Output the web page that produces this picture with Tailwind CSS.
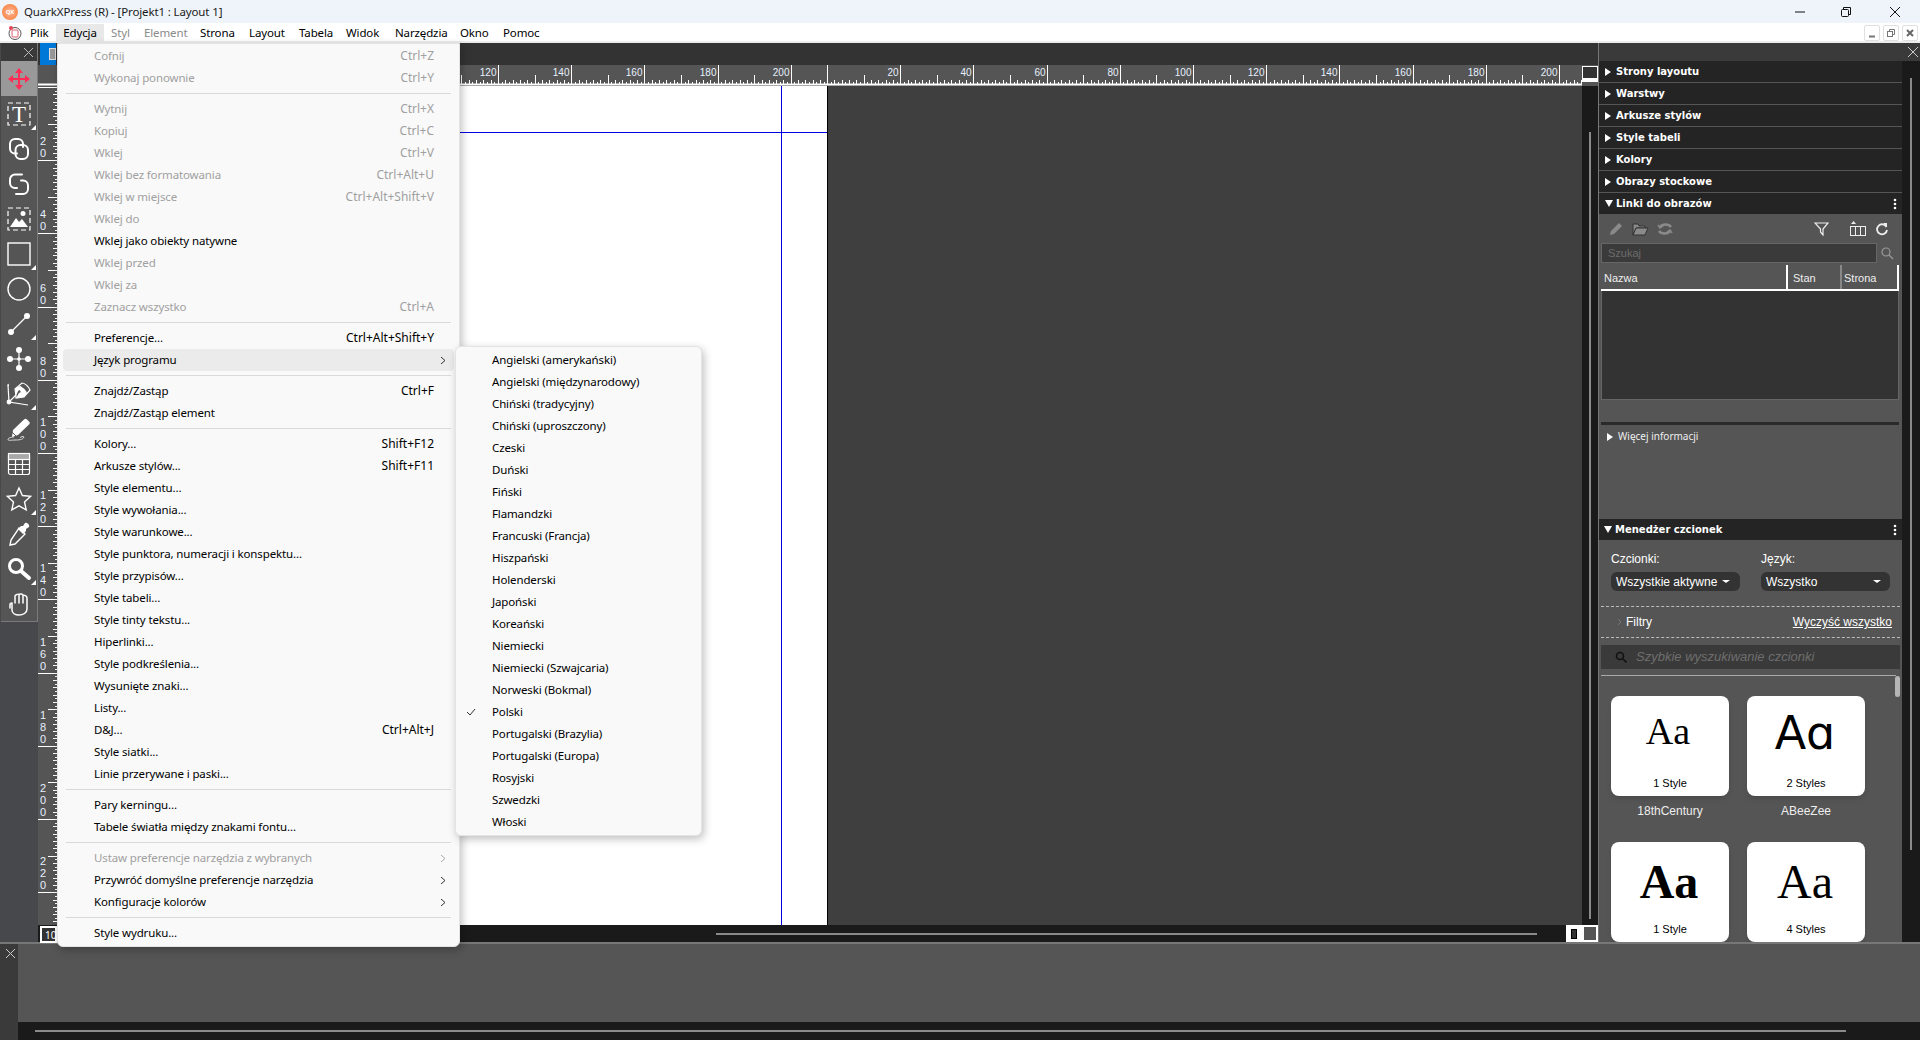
<!DOCTYPE html>
<html lang="pl">
<head>
  <meta charset="UTF-8" />
  <title>QuarkXPress</title>
  <script src="https://cdn.jsdelivr.net/npm/@tailwindcss/browser@4"></script>
</head>
<body class="w-[1920px] h-[1040px] overflow-hidden relative bg-[#555555] font-['Noto_Sans',sans-serif] text-[12px] text-black flex flex-col">

  <!-- title bar -->
  <div class="h-[23px] bg-[#eff4fb] flex items-center relative shrink-0">
    <div class="ml-[2px] mt-[1px] w-[16px] h-[16px] rounded-full bg-[radial-gradient(circle,#ffb39a,#f57a2c)] flex items-center justify-center text-[6px] text-white font-bold">QX</div>
    <span class="ml-[6px] text-[#1a1a1a] text-[11.5px] tracking-[-0.13px]">QuarkXPress (R) - [Projekt1 : Layout 1]</span>
    <div class="ml-auto flex items-center h-full">
      <svg class="mr-[34px]" width="12" height="12" viewBox="0 0 12 12"><path d="M1 6h10" stroke="#111" stroke-width="1"/></svg>
      <svg class="mr-[37px]" width="12" height="12" viewBox="0 0 12 12" fill="none" stroke="#111"><rect x="1.5" y="3.5" width="7" height="7" rx="1"/><path d="M3.5 3V1.5h7v7H9"/></svg>
      <svg class="mr-[19px]" width="12" height="12" viewBox="0 0 12 12" stroke="#111"><path d="M1 1l10 10M11 1L1 11"/></svg>
    </div>
  </div>

  <!-- menu bar -->
  <div class="h-[20px] bg-white border-b-2 border-[#ececec] flex items-center shrink-0 relative text-[11.5px] tracking-[-0.13px] pt-[1px]">
    <svg class="ml-[7px] mr-[7px]" width="16" height="16" viewBox="0 0 16 16" fill="none"><circle cx="8" cy="8.5" r="6" stroke="#555"/><rect x="5" y="5" width="6" height="7" rx="1" stroke="#e25a6a"/><circle cx="4" cy="3" r="2" fill="#e8455c"/></svg>
    <span class="w-[26px]">Plik</span>
    <span class="w-[48px] h-full bg-[#e8e8e8] flex items-center justify-center">Edycja</span>
    <span class="ml-[7px] w-[33px] text-[#8a8a8a]">Styl</span>
    <span class="w-[56px] text-[#8a8a8a]">Element</span>
    <span class="w-[49px]">Strona</span>
    <span class="w-[50px]">Layout</span>
    <span class="w-[47px]">Tabela</span>
    <span class="w-[49px]">Widok</span>
    <span class="w-[65px]">Narzędzia</span>
    <span class="w-[43px]">Okno</span>
    <span>Pomoc</span>
    <div class="ml-auto mr-[2px] flex gap-[3px]">
      <div class="w-[16px] h-[16px] border border-[#e0e0e0] rounded-[2px] flex items-center justify-center"><svg width="10" height="10" viewBox="0 0 10 10"><path d="M2 8.5h6" stroke="#777" stroke-width="2"/></svg></div>
      <div class="w-[16px] h-[16px] border border-[#e0e0e0] rounded-[2px] flex items-center justify-center"><svg width="10" height="10" viewBox="0 0 10 10" fill="none" stroke="#777"><rect x="1.5" y="3.5" width="5" height="5"/><path d="M3.5 3V1.5h5v5H7"/></svg></div>
      <div class="w-[16px] h-[16px] border border-[#e0e0e0] rounded-[2px] flex items-center justify-center"><svg width="10" height="10" viewBox="0 0 10 10" stroke="#666" stroke-width="2"><path d="M2 2l6 6M8 2L2 8"/></svg></div>
    </div>
  </div>

  <!-- workspace -->
  <div class="h-[899px] flex shrink-0 overflow-hidden">

    <!-- tools -->
    <div class="w-[38px] bg-[#47484b] shrink-0">
      <div class="h-[579px] ml-[1px] w-[37px] bg-[#555555] border-r border-b border-[#7a7a7a]">
        <div class="h-[18px] bg-[#3a3a3a] flex justify-end items-center pr-[3px]"><svg width="11" height="11" viewBox="0 0 11 11" stroke="#bbb"><path d="M1 1l9 9M10 1l-9 9"/></svg></div>
        <div class="h-[35px] bg-[#999999] flex items-center justify-center pr-[1px]">
          <svg width="24" height="24" viewBox="0 0 24 24" fill="#ff2d55"><path d="M12 1l4 5h-3v5h5V8l5 4-5 4v-3h-5v5h3l-4 5-4-5h3v-5H6v3l-5-4 5-4v3h5V6H8z"/></svg>
        </div>
        <div class="h-[35px] flex items-center justify-center relative pr-[1px]">
          <svg width="26" height="26" viewBox="0 0 26 26" fill="none"><rect x="2" y="2" width="22" height="22" stroke="#fff" stroke-width="1.2" stroke-dasharray="5 3"/><text x="13" y="21" text-anchor="middle" font-family="Liberation Serif" font-size="23" fill="#fff" stroke="none">T</text></svg>
          <span class="absolute right-[1px] bottom-[1px] w-0 h-0 border-l-[5px] border-l-transparent border-b-[5px] border-b-white"></span>
        </div>
        <div class="h-[35px] flex items-center justify-center pr-[1px]">
          <svg width="26" height="26" viewBox="0 0 26 26" fill="none" stroke="#fff" stroke-width="2" stroke-linecap="round"><path d="M11 17.500H9a5 5 0 0 1-5-5V8a5 5 0 0 1 5-5h3a5 5 0 0 1 5 5v3"/><path d="M9.500 15v-1a5 5 0 0 1 5-5H17a5 5 0 0 1 5 5v4a5 5 0 0 1-5 5h-2.500a5 5 0 0 1-5-5z"/></svg>
        </div>
        <div class="h-[35px] flex items-center justify-center pr-[1px]">
          <svg width="26" height="26" viewBox="0 0 26 26" fill="none" stroke="#fff" stroke-width="2" stroke-linecap="round"><path d="M16 3.500H9a5 5 0 0 0-5 5V12a5 5 0 0 0 5 5h2"/><path d="M15 9.500h2a5 5 0 0 1 5 5V18a5 5 0 0 1-5 5h-7"/></svg>
        </div>
        <div class="h-[35px] flex items-center justify-center pr-[1px]">
          <svg width="26" height="26" viewBox="0 0 26 26" fill="none"><rect x="2" y="2" width="22" height="22" stroke="#fff" stroke-width="1.2" stroke-dasharray="5 3"/><circle cx="17" cy="7.5" r="2.5" fill="#fff"/><path d="M4 21l6-9 3 4 3-3 6 8z" fill="#fff"/></svg>
        </div>
        <div class="h-[35px] flex items-center justify-center relative pr-[1px]">
          <svg width="26" height="26" viewBox="0 0 26 26" fill="none"><rect x="2" y="2" width="22" height="22" stroke="#fff" stroke-width="1.4"/></svg>
          <span class="absolute right-[1px] bottom-[1px] w-0 h-0 border-l-[5px] border-l-transparent border-b-[5px] border-b-white"></span>
        </div>
        <div class="h-[35px] flex items-center justify-center pr-[1px]">
          <svg width="26" height="26" viewBox="0 0 26 26" fill="none"><circle cx="13" cy="13" r="11" stroke="#fff" stroke-width="1.4"/></svg>
        </div>
        <div class="h-[35px] flex items-center justify-center relative pr-[1px]">
          <svg width="26" height="26" viewBox="0 0 26 26" fill="#fff"><path d="M5 21L21 5" stroke="#fff" stroke-width="1.2"/><circle cx="5" cy="21" r="3"/><circle cx="21" cy="5" r="3"/></svg>
          <span class="absolute right-[1px] bottom-[1px] w-0 h-0 border-l-[5px] border-l-transparent border-b-[5px] border-b-white"></span>
        </div>
        <div class="h-[35px] flex items-center justify-center pr-[1px]">
          <svg width="26" height="26" viewBox="0 0 26 26" fill="#fff"><path d="M13 4v18M4 13h18" stroke="#fff" stroke-width="1.2"/><circle cx="13" cy="4" r="3"/><circle cx="13" cy="22" r="3"/><circle cx="4" cy="13" r="3"/><circle cx="22" cy="13" r="3"/><circle cx="13" cy="13" r="1.800"/></svg>
        </div>
        <div class="h-[35px] flex items-center justify-center relative pr-[1px]">
          <svg width="28" height="26" viewBox="0 0 28 26" fill="none" stroke="#fff" stroke-width="1.2"><path d="M3 4l1 17 19 3"/><path d="M3 3l.5 2M4 21l7-7"/><circle cx="4" cy="21" r="1.800" fill="#fff"/><path d="M10 8l7-6c3 0 7 4 8 7l-6 7-8 1c0-3-.5-6-1-9z"/><path d="M15 5c2 .5 6 4 7 7l-3 4-8 1 3-5c1 0 2-1 1.500-2s-2-1-2.500.5l-2 4c-.5-3-.5-5-1-7z" fill="#fff" stroke="none"/></svg>
          <span class="absolute right-[1px] bottom-[1px] w-0 h-0 border-l-[5px] border-l-transparent border-b-[5px] border-b-white"></span>
        </div>
        <div class="h-[35px] flex items-center justify-center pr-[1px]">
          <svg width="26" height="26" viewBox="0 0 26 26" fill="none"><path d="M7 14L18 3.500c1-1 2-1 3 0l2 2c1 1 1 2 0 3L12 19l-6 2z" fill="#fff"/><path d="M6 16l4 4" stroke="#555" stroke-width="1"/><path d="M8 21c-3 0-6 1-6 2.500s4 .5 7 .5 8 0 9-3c-1-1-3 0-4 .5" stroke="#ddd"/></svg>
        </div>
        <div class="h-[35px] flex items-center justify-center pr-[1px]">
          <svg width="24" height="24" viewBox="0 0 24 24" fill="none" stroke="#fff" stroke-width="1.2"><rect x="1.5" y="1.5" width="21" height="21" rx="2"/><rect x="1.5" y="1.5" width="21" height="6" fill="#a8a8a8"/><path d="M1.5 12.5h21M1.5 17.5h21M8.5 7.500v15M15.500 7.500v15"/></svg>
        </div>
        <div class="h-[35px] flex items-center justify-center relative pr-[1px]">
          <svg width="26" height="26" viewBox="0 0 26 26" fill="none" stroke="#fff" stroke-width="1.4"><path d="M13 2l3.400 7.500 8.100.9-6 5.500 1.700 8L13 19.800 5.800 23.900l1.700-8-6-5.500 8.100-.9z"/></svg>
          <span class="absolute right-[1px] bottom-[1px] w-0 h-0 border-l-[5px] border-l-transparent border-b-[5px] border-b-white"></span>
        </div>
        <div class="h-[35px] flex items-center justify-center pr-[1px]">
          <svg width="26" height="26" viewBox="0 0 26 26" fill="none"><path d="M13 7l6 6-10 10-5 1 1-5z" stroke="#fff" stroke-width="1.4"/><path d="M12 8l3-3 2 0 2-3c2-1 5 2 4 4l-3 2v2l-3 3z" fill="#fff"/></svg>
        </div>
        <div class="h-[35px] flex items-center justify-center relative pr-[1px]">
          <svg width="26" height="26" viewBox="0 0 26 26" fill="none" stroke="#fff" stroke-width="3"><circle cx="10" cy="10" r="6.500"/><path d="M15 15l8 7" stroke-width="4" stroke-linecap="round"/></svg>
          <span class="absolute right-[1px] bottom-[1px] w-0 h-0 border-l-[5px] border-l-transparent border-b-[5px] border-b-white"></span>
        </div>
        <div class="h-[35px] flex items-center justify-center pr-[1px]">
          <svg width="24" height="24" viewBox="0 0 24 24" fill="none" stroke="#fff" stroke-width="1.5" stroke-linecap="round"><path d="M5 11v7c0 3 3 5 7 5s8-2 8-6V6M5 11c-1 0-2 1-2 2v3M8 11V4M12 11V2.500M16 11V3.500M20 11V6M8 4c0-1.500 4-2 4-1.500M12 2.500c1-1 4-.5 4 1M16 3.500c1-1 4 .5 4 2.500"/></svg>
        </div>
      </div>
    </div>

    <!-- document window -->
    <div class="flex-1 flex flex-col min-w-0 bg-[#3f3f3f]">
      <div class="h-[22px] bg-[#333333] shrink-0 flex">
        <div class="ml-[2px] w-[16px] bg-[#0078d7] flex items-center pl-[9px]"><span class="w-[7px] h-[12px] border border-[#ddd] bg-[#999]"></span></div>
      </div>
      <div class="h-[21px] shrink-0 flex bg-[#555555]">
        <svg id="hruler" width="1544" height="21" class="shrink-0"></svg>
        <div class="w-[16px] h-[16px] mt-[1px] bg-white p-[1px] pb-[4px]"><div class="w-full h-full bg-[#333333]"></div></div>
      </div>
      <div class="flex-1 flex min-h-0">
        <svg id="vruler" width="19" height="840" class="shrink-0 bg-[#555555]"></svg>
        <div class="w-[771px] bg-white border-r border-black relative shrink-0">
          <div class="absolute left-0 right-0 top-[46px] h-[1px] bg-[#0000e0]"></div>
          <div class="absolute top-0 bottom-0 left-[724px] w-[1px] bg-[#0000e0]"></div>
        </div>
        <div class="flex-1 bg-[#3f3f3f]"></div>
        <div class="w-[16px] bg-[#1a1a1a] flex justify-center pt-[46px] pb-[6px]"><div class="w-[2px] h-full bg-[#8a8a8a]"></div></div>
      </div>
      <div class="h-[17px] shrink-0 bg-[#1a1a1a] flex items-center relative">
        <div class="ml-[678px] w-[821px] h-[2px] bg-[#8a8a8a]"></div>
        <div class="ml-auto flex h-full">
          <div class="w-[16px] h-full bg-white flex items-center justify-center"><div class="w-[6px] h-[10px] border border-black bg-[#333333]"></div></div>
          <div class="w-[16px] h-full border-2 border-white bg-[#555555]"></div>
        </div>
      </div>
    </div>

    <!-- palettes -->
    <div class="w-[322px] shrink-0 flex flex-col">
      <div class="h-[18px] bg-[#3a3a3a] border-l border-[#777] flex justify-end items-center pr-[1px] shrink-0"><svg width="12" height="12" viewBox="0 0 12 12" stroke="#ccc"><path d="M1 1l10 10M11 1L1 11"/></svg></div>
      <div class="flex-1 flex min-h-0">
        <div class="w-[304px] bg-[#555555] border-l border-[#777] flex flex-col overflow-hidden font-['DejaVu_Sans',sans-serif]">
          <div class="h-[22px] shrink-0 bg-[#242424] border-b border-[#555] flex items-center pl-[6px] gap-[5px] text-white text-[10px] font-bold"><span class="w-0 h-0 border-y-[4px] border-y-transparent border-l-[6px] border-l-white"></span>Strony layoutu</div>
          <div class="h-[22px] shrink-0 bg-[#242424] border-b border-[#555] flex items-center pl-[6px] gap-[5px] text-white text-[10px] font-bold"><span class="w-0 h-0 border-y-[4px] border-y-transparent border-l-[6px] border-l-white"></span>Warstwy</div>
          <div class="h-[22px] shrink-0 bg-[#242424] border-b border-[#555] flex items-center pl-[6px] gap-[5px] text-white text-[10px] font-bold"><span class="w-0 h-0 border-y-[4px] border-y-transparent border-l-[6px] border-l-white"></span>Arkusze stylów</div>
          <div class="h-[22px] shrink-0 bg-[#242424] border-b border-[#555] flex items-center pl-[6px] gap-[5px] text-white text-[10px] font-bold"><span class="w-0 h-0 border-y-[4px] border-y-transparent border-l-[6px] border-l-white"></span>Style tabeli</div>
          <div class="h-[22px] shrink-0 bg-[#242424] border-b border-[#555] flex items-center pl-[6px] gap-[5px] text-white text-[10px] font-bold"><span class="w-0 h-0 border-y-[4px] border-y-transparent border-l-[6px] border-l-white"></span>Kolory</div>
          <div class="h-[22px] shrink-0 bg-[#242424] border-b border-[#555] flex items-center pl-[6px] gap-[5px] text-white text-[10px] font-bold"><span class="w-0 h-0 border-y-[4px] border-y-transparent border-l-[6px] border-l-white"></span>Obrazy stockowe</div>
          <div class="h-[21px] shrink-0 bg-[#242424] flex items-center pl-[6px] gap-[3px] text-white text-[10px] font-bold"><span class="w-0 h-0 border-x-[4px] border-x-transparent border-t-[7px] border-t-white"></span>Linki do obrazów
            <svg class="ml-auto mr-[5px]" width="4" height="12" viewBox="0 0 4 12" fill="#fff"><circle cx="2" cy="2" r="1.300"/><circle cx="2" cy="6" r="1.300"/><circle cx="2" cy="10" r="1.300"/></svg>
          </div>

          <!-- image links body -->
          <div class="h-[305px] shrink-0 flex flex-col font-['Liberation_Sans',sans-serif] text-[11px] pl-[2px] pr-[3px]">
            <div class="h-[29px] shrink-0 flex items-center pl-[7px] pr-[10px]">
              <svg width="16" height="16" viewBox="0 0 16 16" fill="#8a8a8a"><path d="M2 14l1-4 8-8 3 3-8 8z"/></svg>
              <svg class="ml-[8px]" width="17" height="16" viewBox="0 0 17 16" fill="#8a8a8a" stroke="#333"><path d="M1 3h5l1 2h6v2H4l-3 7z"/><path d="M4 7h12l-3 7H1z"/></svg>
              <svg class="ml-[8px]" width="16" height="16" viewBox="0 0 16 16" fill="none" stroke="#8a8a8a" stroke-width="2.500"><path d="M14 6A6 4 0 0 0 3 6M2 10a6 4 0 0 0 11 0"/><path d="M1 4l2 3 3-2M15 12l-2-3-3 2" stroke-width="1.500"/></svg>
              <svg class="ml-auto mr-[-1px]" width="15" height="15" viewBox="0 0 15 15" fill="none" stroke="#eee" stroke-width="1.200"><path d="M1 2h13L9 8v6L6.500 11V8z"/></svg>
              <svg class="ml-[21px] mr-[-1px]" width="18" height="16" viewBox="0 0 18 16" fill="none" stroke="#eee"><rect x="1.500" y="5.500" width="5" height="9"/><rect x="6.500" y="5.500" width="10" height="9"/><path d="M11.500 5.500v9"/><path d="M2 3h5L4.500 0z" fill="#eee" stroke="none"/></svg>
              <svg class="ml-[9px]" width="14" height="14" viewBox="0 0 14 14" fill="none" stroke="#eee" stroke-width="1.800"><path d="M11.500 5A5 5 0 1 0 12 8"/><path d="M8 1h4v4z" fill="#eee" stroke="none"/></svg>
            </div>
            <div class="flex shrink-0 h-[20px]">
              <div class="w-[276px] bg-[#3a3a3a] border border-[#666] flex items-center pl-[6px] text-[#6c6c6c]">Szukaj</div>
              <svg class="ml-[3px] mt-[3px]" width="14" height="14" viewBox="0 0 14 14" fill="none" stroke="#999" stroke-width="1.200"><circle cx="6" cy="6" r="4"/><path d="M9 9l4 4"/></svg>
            </div>
            <div class="mt-[2px] flex h-[26px] shrink-0 border-b-2 border-white text-[#eeeeee]">
              <div class="w-[187px] border-r-2 border-white flex items-center pl-[3px] pt-[2px]">Nazwa</div>
              <div class="w-[54px] border-r-2 border-[#888] flex items-center pl-[5px] pt-[2px]">Stan</div>
              <div class="w-[57px] border-r-2 border-white flex items-center pl-[2px] pt-[2px]">Strona</div>
            </div>
            <div class="h-[109px] shrink-0 bg-[#333333] border border-[#666] border-t-0"></div>
            <div class="mt-[22px] h-[3px] shrink-0 bg-[#2b2b2b]"></div>
            <div class="mt-[4px] flex items-center gap-[5px] pl-[6px] text-[#eeeeee] text-[10px] font-['Noto_Sans',sans-serif]"><span class="w-0 h-0 border-y-[4px] border-y-transparent border-l-[6px] border-l-white"></span>Więcej informacji</div>
          </div>

          <!-- font manager -->
          <div class="h-[21px] shrink-0 bg-[#242424] flex items-center pl-[5px] gap-[3px] text-white text-[10px] font-bold"><span class="w-0 h-0 border-x-[4px] border-x-transparent border-t-[7px] border-t-white"></span>Menedżer czcionek
            <svg class="ml-auto mr-[5px]" width="4" height="12" viewBox="0 0 4 12" fill="#fff"><circle cx="2" cy="2" r="1.300"/><circle cx="2" cy="6" r="1.300"/><circle cx="2" cy="10" r="1.300"/></svg>
          </div>
          <div class="flex-1 min-h-0 relative overflow-hidden font-['Liberation_Sans',sans-serif] text-white pl-[2px] pr-[2px]">
            <div class="flex gap-[21px] pl-[10px] pt-[12px]">
              <div class="w-[129px]">
                <div class="leading-[14px]">Czcionki:</div>
                <div class="mt-[6px] h-[19px] bg-[#333333] rounded-[6px] flex items-center pl-[5px]">Wszystkie aktywne<span class="ml-[5px] w-0 h-0 border-x-[4px] border-x-transparent border-t-[3px] border-t-white"></span></div>
              </div>
              <div class="w-[129px]">
                <div class="leading-[14px]">Język:</div>
                <div class="mt-[6px] h-[19px] bg-[#333333] rounded-[6px] flex items-center justify-between pl-[5px] pr-[9px]">Wszystko<span class="w-0 h-0 border-x-[4px] border-x-transparent border-t-[3px] border-t-white"></span></div>
              </div>
            </div>
            <div class="mt-[15px] h-[32px] border-y border-dashed border-[#bbbbbb] flex items-center pl-[16px] pr-[8px]">
              <svg width="5" height="8" viewBox="0 0 5 8" fill="none" stroke="#777"><path d="M1 1l3 3-3 3"/></svg>
              <span class="ml-[4px]">Filtry</span>
              <span class="ml-auto underline">Wyczyść wszystko</span>
            </div>
            <div class="mt-[7px] h-[24px] bg-[#3a3a3a] flex items-center pl-[14px]">
              <svg width="12" height="12" viewBox="0 0 12 12" fill="none" stroke="#111" stroke-width="1.600"><circle cx="5" cy="5" r="3.500"/><path d="M8 8l3.500 3.500"/></svg>
              <span class="ml-[9px] italic text-[13px] text-[#6e6e6e]">Szybkie wyszukiwanie czcionki</span>
            </div>
            <div class="mt-[6px] h-[1px] mr-[4px] bg-[#aaaaaa]"></div>
            <div class="absolute right-[2px] top-[136px] w-[5px] h-[21px] rounded-[3px] bg-[#b5b5b5]"></div>

            <div class="mt-[20px] pl-[10px] grid grid-cols-[118px_118px] gap-x-[18px]">
              <div class="h-[146px]">
                <div class="h-[100px] bg-white rounded-[8px] shadow-md text-black flex flex-col items-center">
                  <div class="h-[70px] pt-[13px] font-['Liberation_Serif',serif] text-[38px] leading-[44px] -ml-[4px]">Aa</div>
                  <div class="mt-[9px] text-[11px]">1 Style</div>
                </div>
                <div class="mt-[6px] text-center text-[#eeeeee]">18thCentury</div>
              </div>
              <div class="h-[146px]">
                <div class="h-[100px] bg-white rounded-[8px] shadow-md text-black flex flex-col items-center">
                  <div class="h-[70px] pt-[11px] font-['DejaVu_Sans',sans-serif] font-normal text-[46px] leading-[52px] -ml-[2px]">Aɑ</div>
                  <div class="mt-[9px] text-[11px]">2 Styles</div>
                </div>
                <div class="mt-[6px] text-center text-[#eeeeee]">ABeeZee</div>
              </div>
              <div class="h-[100px]">
                <div class="h-[100px] bg-white rounded-[8px] shadow-md text-black flex flex-col items-center">
                  <div class="h-[70px] pt-[13px] font-['Liberation_Serif',serif] font-bold text-[48px] leading-[54px] -ml-[2px]">Aa</div>
                  <div class="mt-[9px] text-[11px]">1 Style</div>
                </div>
              </div>
              <div class="h-[100px]">
                <div class="h-[100px] bg-white rounded-[8px] shadow-md text-black flex flex-col items-center">
                  <div class="h-[70px] pt-[13px] font-['Liberation_Serif',serif] text-[48px] leading-[54px] -ml-[2px]">Aa</div>
                  <div class="mt-[9px] text-[11px]">4 Styles</div>
                </div>
              </div>
            </div>
          </div>
        </div>
        <div class="w-[18px] bg-[#1a1a1a] flex justify-center pt-[17px] pb-[92px]"><div class="w-[2px] h-full bg-[#8a8a8a]"></div></div>
      </div>
    </div>
  </div>

  <!-- bottom palette -->
  <div class="flex-1 border-t-2 border-[#777777] flex min-h-0">
    <div class="w-[18px] bg-[#3a3a3a] pl-[5px] pt-[4px]"><svg width="11" height="11" viewBox="0 0 11 11" stroke="#ccc"><path d="M1 1l9 9M10 1l-9 9"/></svg></div>
    <div class="flex-1 flex flex-col">
      <div class="flex-1 bg-[#555555]"></div>
      <div class="h-[18px] bg-[#1a1a1a] flex items-center pl-[17px]"><div class="w-[1811px] h-[2px] bg-[#8a8a8a]"></div></div>
    </div>
  </div>

  <!-- zoom field -->
  <div class="absolute left-[40px] top-[926px] w-[17px] h-[17px] border-2 border-white bg-[#333333] text-white text-[10px] leading-[14px] pl-[3px]">10</div>

  <!-- Edycja menu -->
  <div class="absolute left-[57px] top-[43px] w-[403px] h-[904px] bg-[#f9f9f9] rounded-b-[6px] border border-[#e4e4e4] shadow-[2px_3px_8px_rgba(0,0,0,0.25)] pt-[1px] px-[5px] text-[11.5px] tracking-[-0.13px]">
    <div class="h-[22px] flex items-center justify-between pl-[31px] pr-[20px] text-[#a0a0a0]"><span>Cofnij</span><span class="text-[12px] tracking-normal">Ctrl+Z</span></div>
    <div class="h-[22px] flex items-center justify-between pl-[31px] pr-[20px] text-[#a0a0a0]"><span>Wykonaj ponownie</span><span class="text-[12px] tracking-normal">Ctrl+Y</span></div>
    <div class="h-[9px] flex items-center px-[3px]"><div class="w-full h-[1px] bg-[#d9d9d9]"></div></div>
    <div class="h-[22px] flex items-center justify-between pl-[31px] pr-[20px] text-[#a0a0a0]"><span>Wytnij</span><span class="text-[12px] tracking-normal">Ctrl+X</span></div>
    <div class="h-[22px] flex items-center justify-between pl-[31px] pr-[20px] text-[#a0a0a0]"><span>Kopiuj</span><span class="text-[12px] tracking-normal">Ctrl+C</span></div>
    <div class="h-[22px] flex items-center justify-between pl-[31px] pr-[20px] text-[#a0a0a0]"><span>Wklej</span><span class="text-[12px] tracking-normal">Ctrl+V</span></div>
    <div class="h-[22px] flex items-center justify-between pl-[31px] pr-[20px] text-[#a0a0a0]"><span>Wklej bez formatowania</span><span class="text-[12px] tracking-normal">Ctrl+Alt+U</span></div>
    <div class="h-[22px] flex items-center justify-between pl-[31px] pr-[20px] text-[#a0a0a0]"><span>Wklej w miejsce</span><span class="text-[12px] tracking-normal">Ctrl+Alt+Shift+V</span></div>
    <div class="h-[22px] flex items-center justify-between pl-[31px] pr-[20px] text-[#a0a0a0]"><span>Wklej do</span></div>
    <div class="h-[22px] flex items-center justify-between pl-[31px] pr-[20px]"><span>Wklej jako obiekty natywne</span></div>
    <div class="h-[22px] flex items-center justify-between pl-[31px] pr-[20px] text-[#a0a0a0]"><span>Wklej przed</span></div>
    <div class="h-[22px] flex items-center justify-between pl-[31px] pr-[20px] text-[#a0a0a0]"><span>Wklej za</span></div>
    <div class="h-[22px] flex items-center justify-between pl-[31px] pr-[20px] text-[#a0a0a0]"><span>Zaznacz wszystko</span><span class="text-[12px] tracking-normal">Ctrl+A</span></div>
    <div class="h-[9px] flex items-center px-[3px]"><div class="w-full h-[1px] bg-[#d9d9d9]"></div></div>
    <div class="h-[22px] flex items-center justify-between pl-[31px] pr-[20px]"><span>Preferencje...</span><span class="text-[12px] tracking-normal">Ctrl+Alt+Shift+Y</span></div>
    <div class="h-[22px] flex items-center justify-between pl-[31px] pr-[20px] bg-[#ebebeb] rounded-[4px] relative"><span>Język programu</span>
      <svg class="absolute right-[8px] top-[7px]" width="6" height="9" viewBox="0 0 6 9" fill="none" stroke="#333"><path d="M1 1l4 3.500-4 3.500"/></svg></div>
    <div class="h-[9px] flex items-center px-[3px]"><div class="w-full h-[1px] bg-[#d9d9d9]"></div></div>
    <div class="h-[22px] flex items-center justify-between pl-[31px] pr-[20px]"><span>Znajdź/Zastąp</span><span class="text-[12px] tracking-normal">Ctrl+F</span></div>
    <div class="h-[22px] flex items-center justify-between pl-[31px] pr-[20px]"><span>Znajdź/Zastąp element</span></div>
    <div class="h-[9px] flex items-center px-[3px]"><div class="w-full h-[1px] bg-[#d9d9d9]"></div></div>
    <div class="h-[22px] flex items-center justify-between pl-[31px] pr-[20px]"><span>Kolory...</span><span class="text-[12px] tracking-normal">Shift+F12</span></div>
    <div class="h-[22px] flex items-center justify-between pl-[31px] pr-[20px]"><span>Arkusze stylów...</span><span class="text-[12px] tracking-normal">Shift+F11</span></div>
    <div class="h-[22px] flex items-center pl-[31px]">Style elementu...</div>
    <div class="h-[22px] flex items-center pl-[31px]">Style wywołania...</div>
    <div class="h-[22px] flex items-center pl-[31px]">Style warunkowe...</div>
    <div class="h-[22px] flex items-center pl-[31px]">Style punktora, numeracji i konspektu...</div>
    <div class="h-[22px] flex items-center pl-[31px]">Style przypisów...</div>
    <div class="h-[22px] flex items-center pl-[31px]">Style tabeli...</div>
    <div class="h-[22px] flex items-center pl-[31px]">Style tinty tekstu...</div>
    <div class="h-[22px] flex items-center pl-[31px]">Hiperlinki...</div>
    <div class="h-[22px] flex items-center pl-[31px]">Style podkreślenia...</div>
    <div class="h-[22px] flex items-center pl-[31px]">Wysunięte znaki...</div>
    <div class="h-[22px] flex items-center pl-[31px]">Listy...</div>
    <div class="h-[22px] flex items-center justify-between pl-[31px] pr-[20px]"><span>D&amp;J...</span><span class="text-[12px] tracking-normal">Ctrl+Alt+J</span></div>
    <div class="h-[22px] flex items-center pl-[31px]">Style siatki...</div>
    <div class="h-[22px] flex items-center pl-[31px]">Linie przerywane i paski...</div>
    <div class="h-[9px] flex items-center px-[3px]"><div class="w-full h-[1px] bg-[#d9d9d9]"></div></div>
    <div class="h-[22px] flex items-center pl-[31px]">Pary kerningu...</div>
    <div class="h-[22px] flex items-center pl-[31px]">Tabele światła między znakami fontu...</div>
    <div class="h-[9px] flex items-center px-[3px]"><div class="w-full h-[1px] bg-[#d9d9d9]"></div></div>
    <div class="h-[22px] flex items-center pl-[31px] relative text-[#a0a0a0]">Ustaw preferencje narzędzia z wybranych
      <svg class="absolute right-[8px] top-[7px]" width="6" height="9" viewBox="0 0 6 9" fill="none" stroke="#aaa"><path d="M1 1l4 3.500-4 3.500"/></svg></div>
    <div class="h-[22px] flex items-center pl-[31px] relative">Przywróć domyślne preferencje narzędzia
      <svg class="absolute right-[8px] top-[7px]" width="6" height="9" viewBox="0 0 6 9" fill="none" stroke="#333"><path d="M1 1l4 3.500-4 3.500"/></svg></div>
    <div class="h-[22px] flex items-center pl-[31px] relative">Konfiguracje kolorów
      <svg class="absolute right-[8px] top-[7px]" width="6" height="9" viewBox="0 0 6 9" fill="none" stroke="#333"><path d="M1 1l4 3.500-4 3.500"/></svg></div>
    <div class="h-[9px] flex items-center px-[3px]"><div class="w-full h-[1px] bg-[#d9d9d9]"></div></div>
    <div class="h-[22px] flex items-center pl-[31px]">Style wydruku...</div>
  </div>

  <!-- language submenu -->
  <div class="absolute left-[455px] top-[346px] w-[247px] h-[490px] bg-[#f9f9f9] rounded-[6px] border border-[#e4e4e4] shadow-[2px_3px_8px_rgba(0,0,0,0.25)] pt-[2px] text-[11.5px] tracking-[-0.13px]">
    <div class="h-[22px] flex items-center pl-[36px]">Angielski (amerykański)</div>
    <div class="h-[22px] flex items-center pl-[36px]">Angielski (międzynarodowy)</div>
    <div class="h-[22px] flex items-center pl-[36px]">Chiński (tradycyjny)</div>
    <div class="h-[22px] flex items-center pl-[36px]">Chiński (uproszczony)</div>
    <div class="h-[22px] flex items-center pl-[36px]">Czeski</div>
    <div class="h-[22px] flex items-center pl-[36px]">Duński</div>
    <div class="h-[22px] flex items-center pl-[36px]">Fiński</div>
    <div class="h-[22px] flex items-center pl-[36px]">Flamandzki</div>
    <div class="h-[22px] flex items-center pl-[36px]">Francuski (Francja)</div>
    <div class="h-[22px] flex items-center pl-[36px]">Hiszpański</div>
    <div class="h-[22px] flex items-center pl-[36px]">Holenderski</div>
    <div class="h-[22px] flex items-center pl-[36px]">Japoński</div>
    <div class="h-[22px] flex items-center pl-[36px]">Koreański</div>
    <div class="h-[22px] flex items-center pl-[36px]">Niemiecki</div>
    <div class="h-[22px] flex items-center pl-[36px]">Niemiecki (Szwajcaria)</div>
    <div class="h-[22px] flex items-center pl-[36px]">Norweski (Bokmal)</div>
    <div class="h-[22px] flex items-center pl-[36px] relative">
      <svg class="absolute left-[10px] top-[7px]" width="10" height="8" viewBox="0 0 10 8" fill="none" stroke="#333"><path d="M1 4l3 3 5-6"/></svg>Polski</div>
    <div class="h-[22px] flex items-center pl-[36px]">Portugalski (Brazylia)</div>
    <div class="h-[22px] flex items-center pl-[36px]">Portugalski (Europa)</div>
    <div class="h-[22px] flex items-center pl-[36px]">Rosyjski</div>
    <div class="h-[22px] flex items-center pl-[36px]">Szwedzki</div>
    <div class="h-[22px] flex items-center pl-[36px]">Włoski</div>
  </div>

  <script>
    // rulers: 3.66px per unit, first page 210 wide, second page starts at its edge
    const UNIT = 3.66;

    function hTicks(originX, from, to, maxX) {
      let s = '';
      for (let u = from; u <= to; u++) {
        const x = Math.round(originX + u * UNIT) + 0.5;
        if (x > maxX) break;
        let h = u % 2 ? 2 : 4;
        if (u % 10 === 0) h = 9;
        if (u % 20 === 0) {
          h = 19;
          // labels left of x=460 are under the open menu
          if (u > 0 && x > 425) s += `<text x="${x - 2}" y="11" text-anchor="end" font-size="10" font-family="Liberation Sans" fill="#e6f0ff">${u}</text>`;
        }
        s += `<path d="M${x} ${19 - h}V19" stroke="#fff"/>`;
      }
      return s;
    }

    // svg starts at x=38
    document.getElementById('hruler').innerHTML =
      hTicks(20.8, 0, 209, 789) + hTicks(789, 0, 210, 1544) +
      '<path d="M0 19.500H1544" stroke="#fff" stroke-width="2"/>';

    let v = '';
    for (let u = 0; u <= 229; u++) {
      // svg starts at y=86, zero sits at y=87
      const y = Math.round(1 + u * UNIT) + 0.5;
      let w = u % 2 ? 2 : 4;
      if (u % 10 === 0) w = 9;
      if (u % 20 === 0) {
        w = 19;
        if (u > 0) {
          const digits = String(u).split('');
          digits.forEach((d, i) => {
            const dy = y - 4 - (digits.length - 1 - i) * 12;
            v += `<text x="5" y="${dy}" text-anchor="middle" font-size="11" font-family="Liberation Sans" fill="#e6f0ff">${d}</text>`;
          });
        }
      }
      v += `<path d="M${19 - w} ${y}H19" stroke="#fff"/>`;
    }
    document.getElementById('vruler').innerHTML = v;
  </script>
</body>
</html>
